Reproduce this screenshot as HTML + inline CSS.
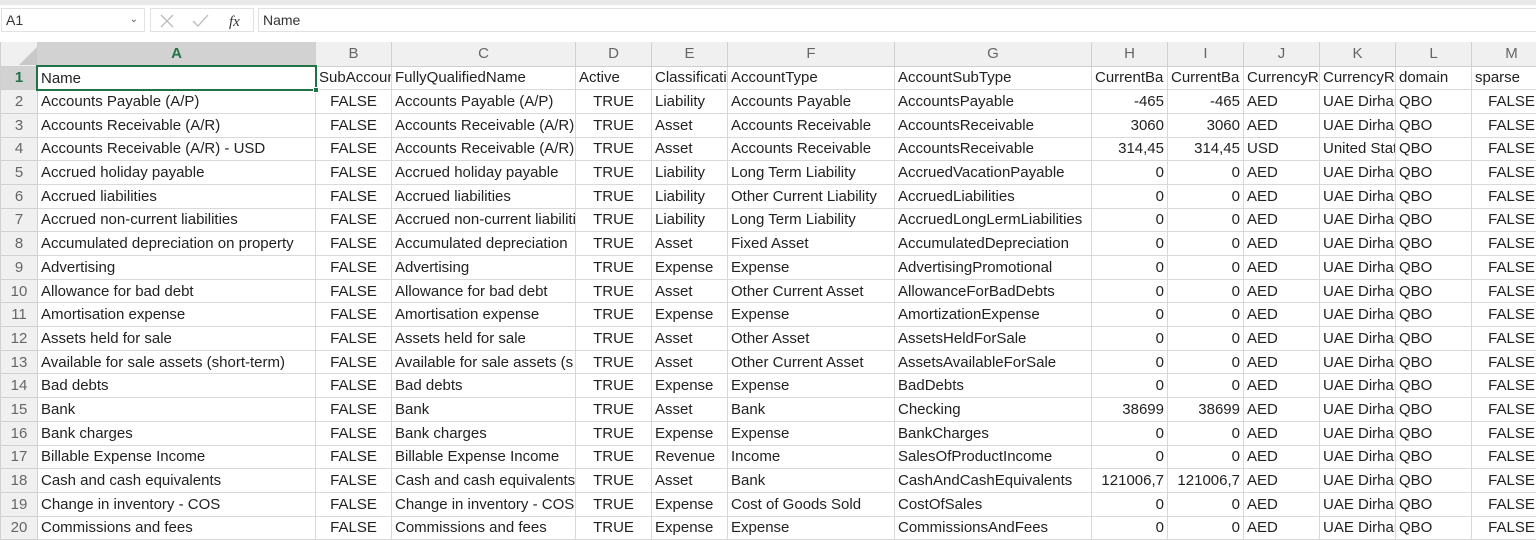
<!DOCTYPE html>
<html><head><meta charset="utf-8"><style>
*{box-sizing:border-box;margin:0;padding:0}
body{width:1536px;height:534px;overflow:hidden;background:#fff;font-family:"Liberation Sans",sans-serif;color:#222;position:relative}
.top{position:absolute;left:0;top:0;width:1536px;height:5px;background:#e9e9e9}
.nb{position:absolute;left:1px;top:8px;width:144px;height:24px;border:1px solid #e1e1e1;font-size:14px;line-height:22px;padding-left:4px;color:#333}
.nb span{position:absolute;right:6px;top:0;font-size:10px;color:#555}
.fx{position:absolute;left:150px;top:8px;width:104px;height:24px;border:1px solid #e1e1e1}
.fb{position:absolute;left:258px;top:8px;width:1278px;height:24px;border:1px solid #e1e1e1;border-right:none;font-size:14px;line-height:22px;padding-left:4px;color:#333}
.grid{position:absolute;left:0;top:42px;width:1551px;border-collapse:collapse;table-layout:fixed;font-size:15px}
.grid td{height:23.7px;border:1px solid #d9d9d9;white-space:nowrap;overflow:hidden;padding:0 3px;line-height:21px}
.grid tr.h td{height:24px;background:#f0f0f0;color:#666;text-align:center;border-color:#d0d0d0;border-top:none;font-size:15px}
.grid td.r{background:#f0f0f0;color:#666;text-align:center;border-color:#d0d0d0;padding:0}
.grid td.n{text-align:right}
.grid td.c{text-align:center}
.grid tr.h td.sel{background:#d2d2d2;color:#217346;font-weight:bold;border-bottom:2px solid #217346}
.grid td.rsel{background:#d2d2d2;color:#217346;font-weight:bold}
.act{position:absolute;left:36px;top:65px;width:281px;height:26px;border:2px solid #217346}
.act i{position:absolute;right:-4px;bottom:-4px;width:6px;height:6px;background:#217346;border:1px solid #fff}
</style></head><body>
<div class="top"></div>
<div class="nb">A1<span>&#8964;</span></div>
<div class="fx"><svg width="104" height="24" viewBox="0 0 104 24"><path d="M10 6l12 12M22 6L10 18" stroke="#bbb" stroke-width="1.3" fill="none"/><path d="M42 12l5 5 10-11" stroke="#bbb" stroke-width="1.3" fill="none"/><text x="78" y="17" font-family="Liberation Serif" font-style="italic" font-size="15" fill="#333">fx</text></svg></div>
<div class="fb">Name</div>
<table class="grid">
<colgroup><col style="width:37px"><col style="width:278px"><col style="width:76px"><col style="width:184px"><col style="width:76px"><col style="width:76px"><col style="width:167px"><col style="width:197px"><col style="width:76px"><col style="width:76px"><col style="width:76px"><col style="width:76px"><col style="width:76px"><col style="width:80px"></colgroup>
<tr class="h"><td style="background:#f0f0f0"><svg width="30" height="20" style="display:block;margin:2px 0 0 4px"><path d="M29 2V20H11z" fill="#c8c8c8"/></svg></td><td class="sel">A</td><td>B</td><td>C</td><td>D</td><td>E</td><td>F</td><td>G</td><td>H</td><td>I</td><td>J</td><td>K</td><td>L</td><td>M</td></tr>
<tr><td class="r rsel">1</td><td>Name</td><td>SubAccount</td><td>FullyQualifiedName</td><td>Active</td><td>Classification</td><td>AccountType</td><td>AccountSubType</td><td>CurrentBa</td><td>CurrentBa</td><td>CurrencyR</td><td>CurrencyR</td><td>domain</td><td>sparse</td></tr>
<tr><td class="r">2</td><td>Accounts Payable (A/P)</td><td class="c">FALSE</td><td>Accounts Payable (A/P)</td><td class="c">TRUE</td><td>Liability</td><td>Accounts Payable</td><td>AccountsPayable</td><td class="n">-465</td><td class="n">-465</td><td>AED</td><td>UAE Dirham</td><td>QBO</td><td class="c">FALSE</td></tr>
<tr><td class="r">3</td><td>Accounts Receivable (A/R)</td><td class="c">FALSE</td><td>Accounts Receivable (A/R)</td><td class="c">TRUE</td><td>Asset</td><td>Accounts Receivable</td><td>AccountsReceivable</td><td class="n">3060</td><td class="n">3060</td><td>AED</td><td>UAE Dirham</td><td>QBO</td><td class="c">FALSE</td></tr>
<tr><td class="r">4</td><td>Accounts Receivable (A/R) - USD</td><td class="c">FALSE</td><td>Accounts Receivable (A/R)</td><td class="c">TRUE</td><td>Asset</td><td>Accounts Receivable</td><td>AccountsReceivable</td><td class="n">314,45</td><td class="n">314,45</td><td>USD</td><td>United States</td><td>QBO</td><td class="c">FALSE</td></tr>
<tr><td class="r">5</td><td>Accrued holiday payable</td><td class="c">FALSE</td><td>Accrued holiday payable</td><td class="c">TRUE</td><td>Liability</td><td>Long Term Liability</td><td>AccruedVacationPayable</td><td class="n">0</td><td class="n">0</td><td>AED</td><td>UAE Dirham</td><td>QBO</td><td class="c">FALSE</td></tr>
<tr><td class="r">6</td><td>Accrued liabilities</td><td class="c">FALSE</td><td>Accrued liabilities</td><td class="c">TRUE</td><td>Liability</td><td>Other Current Liability</td><td>AccruedLiabilities</td><td class="n">0</td><td class="n">0</td><td>AED</td><td>UAE Dirham</td><td>QBO</td><td class="c">FALSE</td></tr>
<tr><td class="r">7</td><td>Accrued non-current liabilities</td><td class="c">FALSE</td><td>Accrued non-current liabilities</td><td class="c">TRUE</td><td>Liability</td><td>Long Term Liability</td><td>AccruedLongLermLiabilities</td><td class="n">0</td><td class="n">0</td><td>AED</td><td>UAE Dirham</td><td>QBO</td><td class="c">FALSE</td></tr>
<tr><td class="r">8</td><td>Accumulated depreciation on property</td><td class="c">FALSE</td><td>Accumulated depreciation</td><td class="c">TRUE</td><td>Asset</td><td>Fixed Asset</td><td>AccumulatedDepreciation</td><td class="n">0</td><td class="n">0</td><td>AED</td><td>UAE Dirham</td><td>QBO</td><td class="c">FALSE</td></tr>
<tr><td class="r">9</td><td>Advertising</td><td class="c">FALSE</td><td>Advertising</td><td class="c">TRUE</td><td>Expense</td><td>Expense</td><td>AdvertisingPromotional</td><td class="n">0</td><td class="n">0</td><td>AED</td><td>UAE Dirham</td><td>QBO</td><td class="c">FALSE</td></tr>
<tr><td class="r">10</td><td>Allowance for bad debt</td><td class="c">FALSE</td><td>Allowance for bad debt</td><td class="c">TRUE</td><td>Asset</td><td>Other Current Asset</td><td>AllowanceForBadDebts</td><td class="n">0</td><td class="n">0</td><td>AED</td><td>UAE Dirham</td><td>QBO</td><td class="c">FALSE</td></tr>
<tr><td class="r">11</td><td>Amortisation expense</td><td class="c">FALSE</td><td>Amortisation expense</td><td class="c">TRUE</td><td>Expense</td><td>Expense</td><td>AmortizationExpense</td><td class="n">0</td><td class="n">0</td><td>AED</td><td>UAE Dirham</td><td>QBO</td><td class="c">FALSE</td></tr>
<tr><td class="r">12</td><td>Assets held for sale</td><td class="c">FALSE</td><td>Assets held for sale</td><td class="c">TRUE</td><td>Asset</td><td>Other Asset</td><td>AssetsHeldForSale</td><td class="n">0</td><td class="n">0</td><td>AED</td><td>UAE Dirham</td><td>QBO</td><td class="c">FALSE</td></tr>
<tr><td class="r">13</td><td>Available for sale assets (short-term)</td><td class="c">FALSE</td><td>Available for sale assets (s</td><td class="c">TRUE</td><td>Asset</td><td>Other Current Asset</td><td>AssetsAvailableForSale</td><td class="n">0</td><td class="n">0</td><td>AED</td><td>UAE Dirham</td><td>QBO</td><td class="c">FALSE</td></tr>
<tr><td class="r">14</td><td>Bad debts</td><td class="c">FALSE</td><td>Bad debts</td><td class="c">TRUE</td><td>Expense</td><td>Expense</td><td>BadDebts</td><td class="n">0</td><td class="n">0</td><td>AED</td><td>UAE Dirham</td><td>QBO</td><td class="c">FALSE</td></tr>
<tr><td class="r">15</td><td>Bank</td><td class="c">FALSE</td><td>Bank</td><td class="c">TRUE</td><td>Asset</td><td>Bank</td><td>Checking</td><td class="n">38699</td><td class="n">38699</td><td>AED</td><td>UAE Dirham</td><td>QBO</td><td class="c">FALSE</td></tr>
<tr><td class="r">16</td><td>Bank charges</td><td class="c">FALSE</td><td>Bank charges</td><td class="c">TRUE</td><td>Expense</td><td>Expense</td><td>BankCharges</td><td class="n">0</td><td class="n">0</td><td>AED</td><td>UAE Dirham</td><td>QBO</td><td class="c">FALSE</td></tr>
<tr><td class="r">17</td><td>Billable Expense Income</td><td class="c">FALSE</td><td>Billable Expense Income</td><td class="c">TRUE</td><td>Revenue</td><td>Income</td><td>SalesOfProductIncome</td><td class="n">0</td><td class="n">0</td><td>AED</td><td>UAE Dirham</td><td>QBO</td><td class="c">FALSE</td></tr>
<tr><td class="r">18</td><td>Cash and cash equivalents</td><td class="c">FALSE</td><td>Cash and cash equivalents</td><td class="c">TRUE</td><td>Asset</td><td>Bank</td><td>CashAndCashEquivalents</td><td class="n">121006,7</td><td class="n">121006,7</td><td>AED</td><td>UAE Dirham</td><td>QBO</td><td class="c">FALSE</td></tr>
<tr><td class="r">19</td><td>Change in inventory - COS</td><td class="c">FALSE</td><td>Change in inventory - COS</td><td class="c">TRUE</td><td>Expense</td><td>Cost of Goods Sold</td><td>CostOfSales</td><td class="n">0</td><td class="n">0</td><td>AED</td><td>UAE Dirham</td><td>QBO</td><td class="c">FALSE</td></tr>
<tr><td class="r">20</td><td>Commissions and fees</td><td class="c">FALSE</td><td>Commissions and fees</td><td class="c">TRUE</td><td>Expense</td><td>Expense</td><td>CommissionsAndFees</td><td class="n">0</td><td class="n">0</td><td>AED</td><td>UAE Dirham</td><td>QBO</td><td class="c">FALSE</td></tr>
</table>
<div class="act"><i></i></div>
</body></html>
